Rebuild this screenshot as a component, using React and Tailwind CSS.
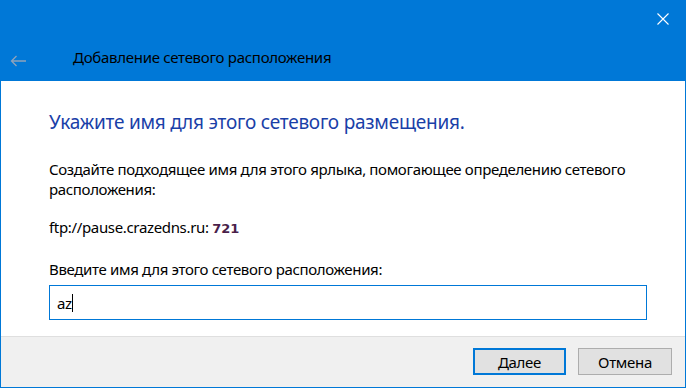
export default function App() {
  return (
    <div
      className="w-[686px] h-[388px] flex flex-col bg-white border-x border-b border-[#0078d7] text-[#000] overflow-hidden"
      style={{ fontFamily: '"Noto Sans", "Open Sans", sans-serif' }}
    >
      {/* header */}
      <div className="relative h-[81px] shrink-0 bg-[#0078d7] flex items-end pb-[14px]">
        <div className="w-[72px] pl-[9px] flex items-center">
          <svg width="17" height="12" viewBox="0 0 17 12" fill="none" stroke="#8ea2bb" strokeWidth="1.3">
            <path d="M16 6H1.5M6.5 1L1.5 6l5 5" />
          </svg>
        </div>
        <div className="text-[15px] leading-[20px] tracking-[-0.28px] text-[#000]">Добавление сетевого расположения</div>
        <svg className="absolute right-[16px] top-[13px]" width="12" height="12" viewBox="0 0 12 12" stroke="#fff" strokeWidth="1.1">
          <path d="M0.5 0.5l11 11M11.5 0.5l-11 11" />
        </svg>
      </div>

      {/* body */}
      <div className="flex-1 flex flex-col pl-[48px] pr-[37px] text-[15px] leading-[20px] tracking-[-0.34px]">
        <h1 className="mt-[27px] text-[19px] leading-[28px] tracking-[-0.22px] text-[#1a3fa8] font-normal">
          Укажите имя для этого сетевого размещения.
        </h1>
        <p className="mt-[23px] pr-[20px]">
          Создайте подходящее имя для этого ярлыка, помогающее определению сетевого расположения:
        </p>
        <p className="mt-[18px]">
          ftp://pause.crazedns.ru:{" "}
          <span
            className="text-[13px] font-bold tracking-normal text-[#4a1f4a]"
            style={{ fontFamily: '"DejaVu Sans", sans-serif' }}
          >
            721
          </span>
        </p>
        <label className="mt-[20px]">
          Введите имя для этого сетевого расположения:
        </label>
        <div className="mt-[6px] h-[35px] w-[598px] border border-[#0078d7] flex items-center pl-[7px]">
          <span>az</span>
          <span className="w-[1px] h-[18px] bg-black" />
        </div>
      </div>

      {/* footer */}
      <div className="h-[51px] shrink-0 bg-[#f0f0f0] border-t border-[#dfdfdf] flex items-start justify-end gap-[12px] pt-[11px] pr-[13px] text-[15px] leading-[20px] tracking-[-0.3px]">
        <button className="w-[93px] h-[27px] bg-[#e1e1e1] border-2 border-[#0078d7]">
          Далее
        </button>
        <button className="w-[94px] h-[27px] bg-[#e1e1e1] border border-[#adadad]">
          Отмена
        </button>
      </div>
    </div>
  );
}
